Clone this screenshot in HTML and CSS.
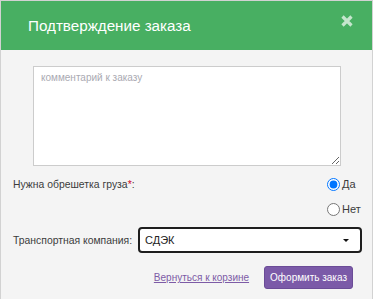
FILE: index.html
```html
<!DOCTYPE html>
<html lang="ru">
<head>
    <meta charset="UTF-8">
    <meta name="viewport" content="width=device-width, initial-scale=1.0">
    <title>Подтверждение заказа</title>
    <link rel="stylesheet" href="styles.css">
</head>
<body>
    <div class="modal">
        <div class="modal-header">
            <h2>Подтверждение заказа</h2>
            <span class="close">
                <svg width="12" height="12" viewBox="0 0 12 12">
                    <path d="M1.5 1.5 L10.5 10.5 M10.5 1.5 L1.5 10.5" stroke="#c5e6cd" stroke-width="3.2" fill="none"/>
                </svg>
            </span>
        </div>
        <form class="modal-body">
            <textarea class="comment" placeholder="комментарий к заказу"></textarea>

            <div class="row row-crate">
                <span class="label">Нужна обрешетка груза<span class="req">*</span>:</span>
                <div class="radios">
                    <label><input type="radio" name="crate" checked> Да</label>
                    <label><input type="radio" name="crate"> Нет</label>
                </div>
            </div>

            <div class="row row-company">
                <label class="label" for="company">Транспортная компания:</label>
                <div class="select">
                    <span>СДЭК</span>
                    <span class="arrow"></span>
                </div>
            </div>

            <div class="actions">
                <a href="#" class="back">Вернуться к корзине</a>
                <button type="button" class="submit">Оформить заказ</button>
            </div>
        </form>
    </div>
</body>
</html>
```

FILE: styles.css
```css
body {
    margin: 0;
    font-family: "Liberation Sans", Arial, sans-serif;
    background-color: #fff;
}
.modal {
    width: 371px;
    height: 298px;
    border: 1px solid #d2d2d2;
    border-bottom: none;
    background-color: #f4f4f4;
}
.modal-header {
    height: 49px;
    background-color: #48af62;
    display: flex;
    justify-content: space-between;
    align-items: center;
    padding: 0 19px 0 27px;
}
.modal-header h2 {
    margin: 0;
    font-size: 15.2px;
    font-weight: normal;
    color: #fff;
}
.close {
    align-self: flex-start;
    margin-top: 14px;
    line-height: 0;
}
.modal-body {
    padding: 16px 10px 0 12px;
}
.comment {
    display: block;
    box-sizing: border-box;
    width: 308px;
    height: 100px;
    margin: 0 0 0 20px;
    padding: 5px 7px;
    border: 1px solid #cccccc;
    background-color: #fff;
    font-family: "Liberation Sans", Arial, sans-serif;
    font-size: 10px;
    resize: vertical;
    outline: none;
}
.comment::placeholder {
    color: #aaaab2;
}
.row {
    display: flex;
    justify-content: space-between;
    font-size: 10.4px;
    color: #3c3c3c;
}
.label {
    white-space: nowrap;
}
.row-crate {
    margin-top: 10px;
}
.row-crate .label {
    padding-top: 3px;
}
.req {
    color: #d0021b;
}
.radios {
    display: flex;
    flex-direction: column;
    gap: 9px;
    width: 35px;
}
.radios label {
    display: flex;
    align-items: center;
    font-size: 11px;
    height: 16px;
}
.radios input {
    margin: 0 2px 0 0;
    width: 13px;
    height: 13px;
}
.row-company {
    margin-top: 10px;
    align-items: center;
}
.select {
    box-sizing: border-box;
    width: 224px;
    height: 26px;
    border: 2px solid #1e1e1e;
    border-radius: 4px;
    background-color: #fff;
    display: flex;
    justify-content: space-between;
    align-items: center;
    padding: 0 11px 0 5px;
    font-size: 11px;
    color: #222;
}
.arrow {
    width: 0;
    height: 0;
    border-left: 3px solid transparent;
    border-right: 3px solid transparent;
    border-top: 3px solid #111;
}
.actions {
    display: flex;
    justify-content: flex-end;
    align-items: center;
    gap: 15px;
    margin-top: 13px;
    padding-right: 9px;
}
.back {
    font-size: 10px;
    color: #7d5ba6;
}
.submit {
    height: 23px;
    padding: 0 5px;
    background-color: #7b5aa8;
    border: 1px solid #6b4c97;
    border-radius: 3px;
    color: #fff;
    font-family: "Liberation Sans", Arial, sans-serif;
    font-size: 10px;
    cursor: pointer;
}
```
